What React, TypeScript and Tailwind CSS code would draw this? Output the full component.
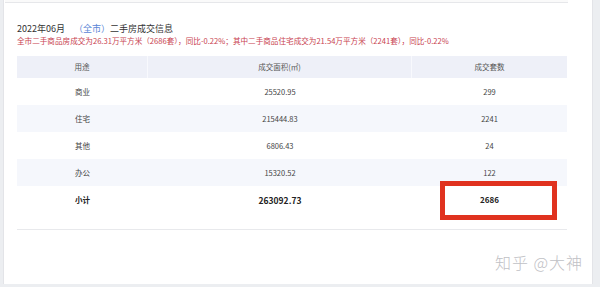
import React from 'react';

const rows = [
  { use: '商业', area: '25520.95', count: '299' },
  { use: '住宅', area: '215444.83', count: '2241' },
  { use: '其他', area: '6806.43', count: '24' },
  { use: '办公', area: '15320.52', count: '122' },
];

export default function App() {
  return (
    <div
      className="relative w-[600px] h-[287px] overflow-hidden bg-[#eceef1]"
      style={{ fontFamily: '"Noto Sans CJK SC", "Noto Sans", sans-serif' }}
    >
      {/* Card */}
      <div className="absolute left-[3px] top-0 w-[590px] h-[284px] bg-white border-l border-r border-[#e3e4e8]">
        <div className="ml-[1px] w-[563px] h-[3px] border-b border-[#e6e7ea] bg-[#fafafa]" />

        <div className="pl-[13px] pt-[20px]">
          {/* Title */}
          <div className="flex items-center h-[12px] text-[9px] leading-[12px] text-[#333]">
            <span>2022年06月</span>
            <span className="ml-[9px] text-[#5b86d6]">（全市）</span>
            <span>二手房成交信息</span>
          </div>
          <div className="mt-[1px] h-[10px] text-[7.6px] leading-[10px] text-[#c8424f] whitespace-nowrap">
            全市二手商品房成交为26.31万平方米（2686套），同比-0.22%；其中二手商品住宅成交为21.54万平方米（2241套），同比-0.22%
          </div>

          {/* Table */}
          <div className="relative mt-[10px] w-[550px] text-[7.5px] text-[#444]">
            <div className="grid grid-cols-[131px_264px_155px] h-[22px] bg-[#eef0f8] text-[#555]">
              <div className="flex items-center justify-center border-r border-[#f8f9fd]">用途</div>
              <div className="flex items-center justify-center border-r border-[#f8f9fd]">成交面积(㎡)</div>
              <div className="flex items-center justify-center">成交套数</div>
            </div>
            {rows.map((r, i) => (
              <div
                key={r.use}
                className={`grid grid-cols-[131px_264px_155px] h-[27px] ${i % 2 === 1 ? 'bg-[#f5f7fc]' : 'bg-white'}`}
              >
                <div className="flex items-center justify-center">{r.use}</div>
                <div className="flex items-center justify-center">{r.area}</div>
                <div className="flex items-center justify-center">{r.count}</div>
              </div>
            ))}
            <div className="grid grid-cols-[131px_264px_155px] h-[28px] font-bold text-[#222]">
              <div className="flex items-center justify-center text-[7.5px]">小计</div>
              <div className="flex items-center justify-center text-[8.5px]">263092.73</div>
              <div className="flex items-center justify-center text-[8px]">2686</div>
            </div>
            <div className="h-[16px] border-b border-[#e8e9ec]" />

            {/* annotation box */}
            <div className="absolute left-[423px] top-[125px] w-[117px] h-[39px] border-[5px] border-[#e0321f]" />
          </div>
        </div>

        {/* watermark */}
        <div className="absolute left-[491px] top-[252px] text-[16px] leading-[20px] tracking-[1px] font-light text-[#bfc1c5] whitespace-nowrap">
          知乎 @大神
        </div>
      </div>
    </div>
  );
}
